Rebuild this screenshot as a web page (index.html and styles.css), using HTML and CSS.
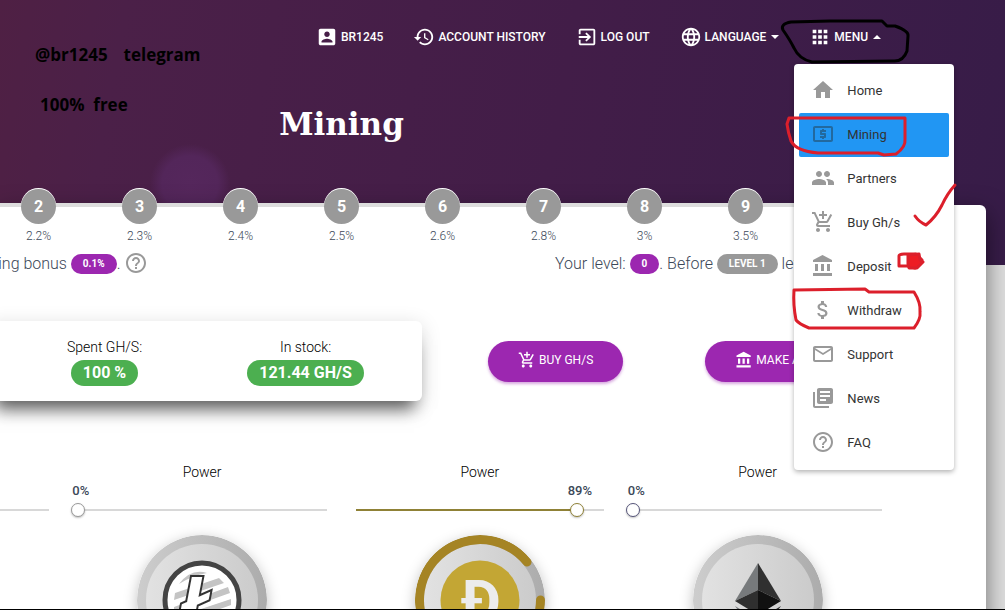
FILE: index.html
```html
<!DOCTYPE html>
<html lang="en">
<head>
    <meta charset="UTF-8">
    <meta name="viewport" content="width=device-width, initial-scale=1.0">
    <title>Mining</title>
    <link rel="stylesheet" href="styles.css">
</head>
<body>
    <!-- Icon set -->
    <svg class="icon-set" aria-hidden="true">
        <symbol id="account" viewBox="0 0 24 24"><path d="M3 5v14c0 1.1.89 2 2 2h14c1.1 0 2-.9 2-2V5c0-1.1-.9-2-2-2H5c-1.11 0-2 .9-2 2zm12 4c0 1.66-1.34 3-3 3s-3-1.34-3-3 1.34-3 3-3 3 1.34 3 3zm-9 8c0-2 4-3.1 6-3.1s6 1.1 6 3.1v1H6v-1z"/></symbol>
        <symbol id="history" viewBox="0 0 24 24"><path d="M13 3c-4.97 0-9 4.03-9 9H1l3.89 3.89.07.14L9 12H6c0-3.87 3.13-7 7-7s7 3.13 7 7-3.13 7-7 7c-1.93 0-3.68-.79-4.94-2.06l-1.42 1.42C8.27 19.99 10.51 21 13 21c4.97 0 9-4.03 9-9s-4.03-9-9-9zm-1 5v5l4.28 2.54.72-1.21-3.5-2.08V8H12z"/></symbol>
        <symbol id="exit" viewBox="0 0 24 24"><path d="M10.09 15.59L11.5 17l5-5-5-5-1.41 1.41L12.67 11H3v2h9.67l-2.58 2.59zM19 3H5c-1.11 0-2 .9-2 2v4h2V5h14v14H5v-4H3v4c0 1.1.89 2 2 2h14c1.1 0 2-.9 2-2V5c0-1.1-.9-2-2-2z"/></symbol>
        <symbol id="language" viewBox="0 0 24 24"><path d="M11.99 2C6.47 2 2 6.48 2 12s4.47 10 9.99 10C17.52 22 22 17.52 22 12S17.52 2 11.99 2zm6.93 6h-2.95c-.32-1.25-.78-2.45-1.38-3.56 1.84.63 3.37 1.91 4.33 3.56zM12 4.04c.83 1.2 1.48 2.53 1.91 3.96h-3.82c.43-1.43 1.08-2.76 1.91-3.96zM4.26 14C4.1 13.36 4 12.69 4 12s.1-1.36.26-2h3.38c-.08.66-.14 1.32-.14 2s.06 1.34.14 2H4.26zm.82 2h2.95c.32 1.25.78 2.45 1.38 3.56-1.84-.63-3.37-1.9-4.33-3.56zm2.95-8H5.08c.96-1.66 2.49-2.93 4.33-3.56C8.81 5.55 8.35 6.75 8.03 8zM12 19.96c-.83-1.2-1.48-2.53-1.91-3.96h3.82c-.43 1.43-1.08 2.76-1.91 3.96zM14.34 14H9.66c-.09-.66-.16-1.32-.16-2s.07-1.35.16-2h4.68c.09.65.16 1.32.16 2s-.07 1.34-.16 2zm.25 5.56c.6-1.11 1.06-2.31 1.38-3.56h2.95c-.96 1.65-2.49 2.93-4.33 3.56zM16.36 14c.08-.66.14-1.32.14-2s-.06-1.34-.14-2h3.38c.16.64.26 1.31.26 2s-.1 1.36-.26 2h-3.38z"/></symbol>
        <symbol id="apps" viewBox="0 0 24 24"><path d="M4 8h4V4H4v4zm6 12h4v-4h-4v4zm-6 0h4v-4H4v4zm0-6h4v-4H4v4zm6 0h4v-4h-4v4zm6-10v4h4V4h-4zm-6 4h4V4h-4v4zm6 6h4v-4h-4v4zm0 6h4v-4h-4v4z"/></symbol>
        <symbol id="home" viewBox="0 0 24 24"><path d="M10 20v-6h4v6h5v-8h3L12 3 2 12h3v8z"/></symbol>
        <symbol id="atm" viewBox="0 0 24 24"><path d="M11 17h2v-1h1c.55 0 1-.45 1-1v-3c0-.55-.45-1-1-1h-3v-1h4V8h-2V7h-2v1h-1c-.55 0-1 .45-1 1v3c0 .55.45 1 1 1h3v1H9v2h2v1zm9-13H4c-1.11 0-1.99.89-1.99 2L2 18c0 1.11.89 2 2 2h16c1.11 0 2-.89 2-2V6c0-1.11-.89-2-2-2zm0 14H4V6h16v12z"/></symbol>
        <symbol id="group" viewBox="0 0 24 24"><path d="M16 11c1.66 0 2.99-1.34 2.99-3S17.66 5 16 5s-3 1.34-3 3 1.34 3 3 3zm-8 0c1.66 0 2.99-1.34 2.99-3S9.66 5 8 5 5 6.34 5 8s1.34 3 3 3zm0 2c-2.33 0-7 1.17-7 3.5V19h14v-2.5c0-2.33-4.67-3.5-7-3.5zm8 0c-.29 0-.62.02-.97.05 1.16.84 1.97 1.97 1.97 3.45V19h6v-2.5c0-2.33-4.67-3.5-7-3.5z"/></symbol>
        <symbol id="cart" viewBox="0 0 24 24"><path d="M11 9h2V6h3V4h-3V1h-2v3H8v2h3v3zm-4 9c-1.1 0-1.99.9-1.99 2S5.9 22 7 22s2-.9 2-2-.9-2-2-2zm10 0c-1.1 0-1.99.9-1.99 2s.89 2 1.99 2 2-.9 2-2-.9-2-2-2zm-9.83-3.25l.03-.12.9-1.63h7.45c.75 0 1.41-.41 1.75-1.03l3.86-7.01L19.42 4h-.01l-1.1 2-2.76 5H8.53l-.13-.27L6.16 6l-.95-2-.94-2H1v2h2l3.6 7.59-1.35 2.45c-.16.28-.25.61-.25.96 0 1.1.9 2 2 2h12v-2H7.42c-.13 0-.25-.11-.25-.25z"/></symbol>
        <symbol id="bank" viewBox="0 0 24 24"><path d="M4 10v7h3v-7H4zm6 0v7h3v-7h-3zM2 22h19v-3H2v3zm14-12v7h3v-7h-3zm-4.5-9L2 6v2h19V6l-9.5-5z"/></symbol>
        <symbol id="money" viewBox="0 0 24 24"><path d="M11.8 10.9c-2.27-.59-3-1.2-3-2.15 0-1.09 1.01-1.85 2.7-1.85 1.78 0 2.44.85 2.5 2.1h2.21c-.07-1.72-1.12-3.3-3.21-3.81V3h-3v2.16c-1.94.42-3.5 1.68-3.5 3.61 0 2.31 1.91 3.46 4.7 4.13 2.5.6 3 1.48 3 2.41 0 .69-.49 1.79-2.7 1.79-2.06 0-2.87-.92-2.98-2.1h-2.2c.12 2.19 1.76 3.42 3.68 3.83V21h3v-2.15c1.95-.37 3.5-1.5 3.5-3.55 0-2.84-2.43-3.81-4.7-4.4z"/></symbol>
        <symbol id="mail" viewBox="0 0 24 24"><path d="M20 4H4c-1.1 0-1.99.9-1.99 2L2 18c0 1.1.9 2 2 2h16c1.1 0 2-.9 2-2V6c0-1.1-.9-2-2-2zm0 14H4V8l8 5 8-5v10zm-8-7L4 6h16l-8 5z"/></symbol>
        <symbol id="books" viewBox="0 0 24 24"><path d="M4 6H2v14c0 1.1.9 2 2 2h14v-2H4V6zm16-4H8c-1.1 0-2 .9-2 2v12c0 1.1.9 2 2 2h12c1.1 0 2-.9 2-2V4c0-1.1-.9-2-2-2zm-1 9H9V9h10v2zm-4 4H9v-2h6v2zm4-8H9V5h10v2z"/></symbol>
        <symbol id="help" viewBox="0 0 24 24"><path d="M11 18h2v-2h-2v2zm1-16C6.48 2 2 6.48 2 12s4.48 10 10 10 10-4.48 10-10S17.52 2 12 2zm0 18c-4.41 0-8-3.59-8-8s3.59-8 8-8 8 3.59 8 8-3.59 8-8 8zm0-14c-2.21 0-4 1.79-4 4h2c0-1.1.9-2 2-2s2 .9 2 2c0 2-3 1.75-3 5h2c0-2.25 3-2.5 3-5 0-2.21-1.79-4-4-4z"/></symbol>
    </svg>

    <div class="page">
        <header class="hero">
            <nav class="navbar">
                <a class="nav-link" href="#"><svg class="nav-icon"><use href="#account"/></svg>BR1245</a>
                <a class="nav-link" href="#"><svg class="nav-icon"><use href="#history"/></svg>Account history</a>
                <a class="nav-link" href="#"><svg class="nav-icon"><use href="#exit"/></svg>Log out</a>
                <button class="nav-link" type="button"><svg class="nav-icon"><use href="#language"/></svg>Language<span class="caret"></span></button>
                <div class="dropdown">
                    <button class="nav-link" type="button" aria-expanded="true"><svg class="nav-icon"><use href="#apps"/></svg>Menu<span class="caret caret-up"></span></button>
                    <div class="menu">
                        <a class="menu-item" href="#"><svg class="menu-icon"><use href="#home"/></svg>Home</a>
                        <a class="menu-item active" href="#"><svg class="menu-icon"><use href="#atm"/></svg>Mining</a>
                        <a class="menu-item" href="#"><svg class="menu-icon"><use href="#group"/></svg>Partners</a>
                        <a class="menu-item" href="#"><svg class="menu-icon"><use href="#cart"/></svg>Buy Gh/s</a>
                        <a class="menu-item" href="#"><svg class="menu-icon"><use href="#bank"/></svg>Deposit</a>
                        <a class="menu-item" href="#"><svg class="menu-icon"><use href="#money"/></svg>Withdraw</a>
                        <a class="menu-item" href="#"><svg class="menu-icon"><use href="#mail"/></svg>Support</a>
                        <a class="menu-item" href="#"><svg class="menu-icon"><use href="#books"/></svg>News</a>
                        <a class="menu-item" href="#"><svg class="menu-icon"><use href="#help"/></svg>FAQ</a>
                    </div>
                </div>
            </nav>
            <h1 class="title">Mining</h1>
        </header>

        <main class="panel">
            <div class="steps">
                <div class="step"><span class="step-number">2</span>2.2%</div>
                <div class="step"><span class="step-number">3</span>2.3%</div>
                <div class="step"><span class="step-number">4</span>2.4%</div>
                <div class="step"><span class="step-number">5</span>2.5%</div>
                <div class="step"><span class="step-number">6</span>2.6%</div>
                <div class="step"><span class="step-number">7</span>2.8%</div>
                <div class="step"><span class="step-number">8</span>3%</div>
                <div class="step"><span class="step-number">9</span>3.5%</div>
                <div class="step"></div>
            </div>

            <div class="levels">
                <p class="level-text">Mining bonus <span class="badge">0.1%</span>. <svg class="help-icon"><use href="#help"/></svg></p>
                <p class="level-text level-next">Your level: <span class="badge">0</span>. Before <span class="badge badge-gray">LEVEL 1</span> left</p>
            </div>

            <div class="summary">
                <div class="stock">
                    <div class="stock-item">Spent GH/S:<span class="badge badge-green">100 %</span></div>
                    <div class="stock-item">In stock:<span class="badge badge-green">121.44 GH/S</span></div>
                </div>
                <div class="actions">
                    <button class="button" type="button"><svg class="button-icon"><use href="#cart"/></svg>Buy GH/s</button>
                    <button class="button" type="button"><svg class="button-icon"><use href="#bank"/></svg>Make a deposit</button>
                </div>
            </div>

            <div class="coins">
                <section class="coin">
                    <div class="slider"><input class="range" type="range" min="0" max="100" value="0" aria-label="Power"></div>
                </section>
                <section class="coin">
                    <label class="power" for="ltc">Power</label>
                    <div class="slider">
                        <output class="value" for="ltc" style="left: 0%">0%</output>
                        <input class="range" id="ltc" type="range" min="0" max="100" value="0">
                    </div>
                    <svg class="coin-logo" viewBox="0 0 130 130">
                        <circle cx="65" cy="65" r="65" fill="url(#rim)"/>
                        <circle cx="65" cy="65" r="56" fill="url(#face)"/>
                        <circle cx="65" cy="65" r="37" fill="#fff" stroke="#444" stroke-width="5"/>
                        <g fill="#c4c4c4">
                            <path d="M42 49Q54 33 70 38Q54 41 42 49z"/>
                            <path d="M38 58L82 43l5 5-50 17zM37 72l54-20 2 6-56 20zM40 82l54-18v6l-52 19z"/>
                        </g>
                        <text class="ltc-sign" x="66" y="92" text-anchor="middle">Ł</text>
                    </svg>
                </section>
                <section class="coin coin-doge">
                    <label class="power" for="doge">Power</label>
                    <div class="slider">
                        <output class="value" for="doge" style="left: 89%">89%</output>
                        <input class="range" id="doge" type="range" min="0" max="100" value="89" style="--fill: 89%">
                    </div>
                    <svg class="coin-logo" viewBox="0 0 130 130">
                        <circle cx="65" cy="65" r="65" fill="url(#rim)"/>
                        <circle cx="65" cy="65" r="56" fill="url(#face)"/>
                        <path d="M112 27A60.500 60.500 0 1 0 125.500 65" fill="none" stroke="#a58424" stroke-width="9" stroke-linecap="round"/>
                        <circle cx="65" cy="65" r="39.500" fill="#c3a634"/>
                        <text class="doge-sign" x="66" y="87" text-anchor="middle">Ð</text>
                    </svg>
                </section>
                <section class="coin coin-eth">
                    <label class="power" for="eth">Power</label>
                    <div class="slider">
                        <output class="value" for="eth" style="left: 0%">0%</output>
                        <input class="range" id="eth" type="range" min="0" max="100" value="0">
                    </div>
                    <svg class="coin-logo" viewBox="0 0 130 130">
                        <defs>
                            <linearGradient id="rim"><stop offset="0" stop-color="#cdcdcd"/><stop offset="1" stop-color="#acacac"/></linearGradient>
                            <linearGradient id="face"><stop offset="0" stop-color="#e2e2e2"/><stop offset="1" stop-color="#cbcbcb"/></linearGradient>
                        </defs>
                        <circle cx="65" cy="65" r="65" fill="url(#rim)"/>
                        <circle cx="65" cy="65" r="56" fill="url(#face)"/>
                        <path d="M65 28v27L42 66z" fill="#777a7c"/>
                        <path d="M65 28v27l23 11z" fill="#303030"/>
                        <path d="M65 55v25L42 66z" fill="#2f2f2f"/>
                        <path d="M65 55v25l23-14z" fill="#111"/>
                        <path d="M42 71l23 14v18z" fill="#777a7c"/>
                        <path d="M88 71L65 85v18z" fill="#303030"/>
                    </svg>
                </section>
            </div>
        </main>

        <!-- Hand-made notes over the page -->
        <div class="notes">
            <p class="note note-contact"><span>@br1245</span><span>telegram</span></p>
            <p class="note note-free"><span>100%&nbsp; free</span></p>
            <svg class="marks" width="1005" height="610" viewBox="0 0 1005 610">
                <g class="mark mark-black">
                    <path d="M783 30Q780 24 791 22L830 21 882 21 887 26 895 26Q909 31 908 36L907 51Q903 62 893 61L812 62Q799 59 794 48Q790 40 783 30z"/>
                </g>
                <g class="mark">
                    <path d="M789 118H905V139Q906 147 896 154L884 155 878 153 818 153Q796 151 791 141Q788 132 787 124z"/>
                    <path d="M794 290L865 289 869 292 914 292Q921 303 920 312Q921 319 914 328L809 328Q799 324 796 320Q793 305 794 290z"/>
                    <path d="M915 216Q919 222 926 225Q936 217 942 205Q947 194 955 185"/>
                    <path d="M899 266V256Q899 254 904 254H916L922 260 915 268 908 266z"/>
                    <path class="mark-blob" d="M908 255L919 254 920 260 923 262 917 268 909 268 908 264z"/>
                </g>
            </svg>
        </div>
    </div>
</body>
</html>
```
FILE: styles.css
```css
:root {
    --bleed: 214px;   /* part of the container left of the window */
    --side: 108px;
    --purple: #9c27b0;
}

* {
    box-sizing: border-box;
}

body {
    margin: 0;
    font-family: Roboto, "Liberation Sans", sans-serif;
    background: #dedede;
}

.icon-set {
    display: none;
}

.page {
    position: relative;
    height: 100vh;
    overflow: hidden;
    border-bottom: 1px solid #000;
}

svg {
    fill: currentColor;
    flex: none;
}

/* Header */
.hero {
    height: 265px;
    padding-top: 17px;
    background:
        radial-gradient(circle at 190px 184px, #55275c 0, #53265a 28px, transparent 40px),
        linear-gradient(100deg, #4f2044 0, #4b2048 12%, #421d48 55%, #371c48 100%);
}

.navbar {
    display: flex;
    justify-content: flex-end;
    padding-right: 109px;
}

.nav-link {
    display: flex;
    align-items: center;
    height: 40px;
    padding: 0 15px;
    border: none;
    background: none;
    font: 500 12px Roboto, "Liberation Sans", sans-serif;
    color: #fff;
    text-transform: uppercase;
    text-decoration: none;
    white-space: nowrap;
    cursor: pointer;
}

.nav-icon {
    width: 22px;
    height: 22px;
    margin-right: 3px;
}

.caret {
    margin-left: 5px;
    border: 4px solid transparent;
    border-top-color: #fff;
    border-bottom: none;
}

.caret-up {
    border-top: none;
    border-bottom: 4px solid #fff;
}

.title {
    margin: 47px var(--side) 0 calc(-1 * var(--bleed));
    text-align: center;
    font: bold 31px/40px "Roboto Slab", "DejaVu Serif", serif;
    color: #fff;
}

/* Drop-down menu */
.dropdown {
    position: relative;
    z-index: 20;
}

.menu {
    position: absolute;
    top: 47px;
    left: 0;
    width: 160px;
    padding: 5px;
    border-radius: 4px;
    background: #fff;
    box-shadow: 0 2px 5px rgba(0, 0, 0, 0.3);
}

.menu-item {
    display: flex;
    align-items: center;
    gap: 12px;
    height: 44px;
    padding: 0 12px 2px;
    border-radius: 2px;
    font-size: 13px;
    color: #333;
    text-decoration: none;
}

.menu-icon {
    width: 24px;
    height: 24px;
    color: #999;
}

.active {
    background: #2196f3;
}

.active .menu-icon {
    color: #22699f;
}

/* White panel */
.panel {
    display: flow-root;
    position: relative;
    height: 100%;
    margin: -60px 19px 0 0;
    padding-right: 89px;
    border-radius: 0 6px 0 0;
    background: #fff;
    box-shadow: 0 8px 24px rgba(0, 0, 0, 0.5);
}

/* the step line runs along the panel's top edge */
.steps {
    display: grid;
    grid-template-columns: repeat(9, 1fr);
    margin-top: -2px;
    margin-left: -12px;
    border-top: 4px solid #ddd;
}

.step {
    display: flex;
    flex-direction: column;
    align-items: center;
    gap: 4px;
    margin-top: -18px;
    font-size: 12px;
    line-height: 16px;
    font-weight: 300;
    color: #3c4858;
}

.step-number {
    width: 35px;
    height: 35px;
    border-radius: 50%;
    background: #999;
    box-shadow: 0 -1px 0 #fff;
    text-align: center;
    font-size: 16px;
    line-height: 35px;
    font-weight: 700;
    color: #fff;
}

.levels {
    display: flex;
    justify-content: space-between;
    height: 37px;
    margin-left: -28px;
}

.level-text {
    display: flex;
    align-items: center;
    height: 38px;
    margin: 0;
    font-size: 16px;
    font-weight: 300;
    color: #3c4858;
    white-space: pre;
}

.level-next {
    width: 342px;
}

.badge {
    padding: 0 12px;
    border-radius: 13px;
    background: var(--purple);
    font-size: 10px;
    line-height: 20px;
    font-weight: 700;
    color: #fff;
}

.level-text .badge {
    margin-top: 2px;
}

.badge-gray {
    background: #999;
}

.badge-green {
    background: #4caf50;
    font-size: 16px;
    line-height: 26px;
}

.help-icon {
    width: 24px;
    height: 24px;
    color: #999;
}

/* Balance and buttons */
.summary {
    display: flex;
    align-items: center;
    gap: 66px;
    margin-top: 40px;
}

.stock {
    display: grid;
    grid-template-columns: 1fr 1fr;
    flex: none;
    width: 434px;
    height: 80px;
    margin-left: -12px;
    padding: 0 16px;
    border-radius: 6px;
    background: #fff;
    box-shadow: 0 16px 16px -8px rgba(0, 0, 0, 0.6), 0 4px 20px rgba(0, 0, 0, 0.15);
}

.stock-item {
    display: flex;
    flex-direction: column;
    align-items: center;
    justify-content: center;
    gap: 3px;
    font-size: 14px;
    line-height: 20px;
    font-weight: 300;
}

.actions {
    display: flex;
    gap: 82px;
}

.button {
    display: flex;
    align-items: center;
    gap: 3px;
    height: 41px;
    padding: 0 30px 2px;
    border: none;
    border-radius: 30px;
    background: var(--purple);
    box-shadow: 0 2px 3px rgba(156, 39, 176, 0.4);
    font: 400 12px Roboto, "Liberation Sans", sans-serif;
    color: #fff;
    text-transform: uppercase;
    white-space: nowrap;
    cursor: pointer;
}

.button-icon {
    width: 18px;
    height: 18px;
}

/* Coins */
.coins {
    display: grid;
    grid-template-columns: repeat(4, 1fr);
    margin: 61px 0 0 calc(-1 * var(--bleed));
}

.coin {
    --accent: #999;
    display: flex;
    flex-direction: column;
    align-items: center;
    padding: 0 15px 0 14px;
}

.coin:first-child {
    padding-top: 20px;
}

.coin-doge {
    --accent: #8f8136;
}

.coin-eth {
    --accent: #56557a;
}

.power {
    font-size: 14px;
    line-height: 20px;
    font-weight: 300;
}

.slider {
    position: relative;
    width: 100%;
    padding-top: 20px;
}

.value {
    position: absolute;
    top: 0;
    margin-left: 3px;
    transform: translateX(-50%);
    font-size: 13px;
    line-height: 18px;
    font-weight: 500;
    color: #3c4858;
}

.range {
    --fill: 0%;
    display: block;
    width: calc(100% + 14px);
    height: 16px;
    margin: 0 -7px;
    appearance: none;
    background: linear-gradient(to right, var(--accent) var(--fill), #d8d8d8 var(--fill)) center / calc(100% - 14px) 2px no-repeat;
}

.range::-webkit-slider-thumb {
    appearance: none;
    width: 14px;
    height: 14px;
    border: 1px solid var(--accent);
    border-radius: 50%;
    background: #fff;
    box-shadow: 0 1px 2px rgba(0, 0, 0, 0.25);
}

.coin-logo {
    width: 130px;
    height: 130px;
    margin-top: 17px;
    border-radius: 50%;
    box-shadow: 0 4px 14px rgba(0, 0, 0, 0.25);
}

.ltc-sign {
    fill: #fff;
    stroke: #333;
    stroke-width: 4px;
    paint-order: stroke;
    font: italic 700 72px "Liberation Sans", sans-serif;
}

.doge-sign {
    fill: #ececec;
    font: 700 60px Roboto, sans-serif;
}

/* Notes */
.notes {
    position: absolute;
    inset: 0;
    z-index: 30;
    pointer-events: none;
}

.note {
    position: absolute;
    margin: 0;
    display: flex;
    gap: 16px;
    font: 700 17px/20px "Open Sans", "Noto Sans", sans-serif;
    color: #000;
}

.note-contact {
    top: 45px;
    left: 35px;
}

.note-free {
    top: 95px;
    left: 40px;
}

.marks {
    display: block;
}

.mark {
    fill: none;
    stroke: #dc1f2b;
    stroke-width: 3px;
    stroke-linecap: round;
    stroke-linejoin: round;
}

.mark-black {
    stroke: #000;
}

.mark-blob {
    fill: #ed1c24;
}
```
